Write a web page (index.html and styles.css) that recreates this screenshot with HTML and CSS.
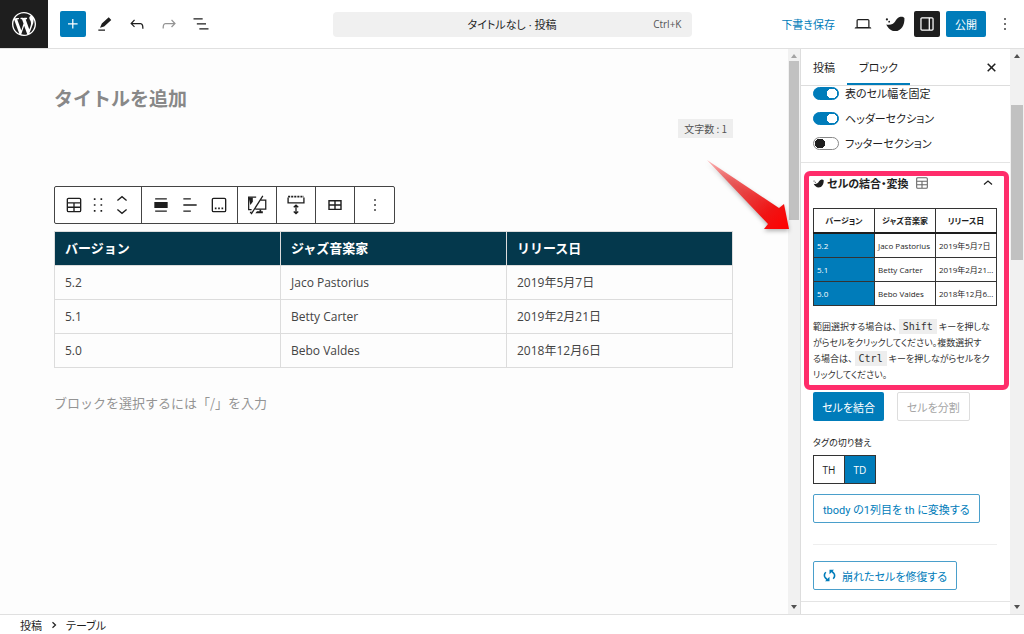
FILE: index.html
```html
<!DOCTYPE html>
<html lang="ja">
<head>
<meta charset="utf-8">
<title>タイトルなし · 投稿</title>
<link rel="stylesheet" href="styles.css">
</head>
<body>
<svg class="defs" aria-hidden="true">
  <symbol id="bird" viewBox="0 0 24 24"><path d="M1.500 12.500c2.500.8 5.500.6 8-.8C12.500 10 13.500 4.500 18.500 3.300c2-.4 3.700.2 4.800 1.400.5 8.500-3.800 15.800-11 15.800-5 0-8.800-3.500-10.800-8z"/><circle cx="2.300" cy="6.500" r="1.300"/><circle cx="5" cy="9.200" r="1.100"/></symbol>
  <symbol id="table" viewBox="0 0 24 24"><path fill="none" stroke="currentColor" stroke-width="1.600" d="M5.500 4h13A1.500 1.500 0 0 1 20 5.500v13a1.500 1.500 0 0 1-1.500 1.500h-13A1.500 1.500 0 0 1 4 18.500v-13A1.500 1.500 0 0 1 5.500 4zM4 9.500h16M4 14.700h16M12 9.500V20"/></symbol>
  <symbol id="more" viewBox="0 0 24 24"><path d="M13 19h-2v-2h2v2zm0-6h-2v-2h2v2zm0-6h-2V5h2v2z"/></symbol>
</svg>
<div class="app">
  <header class="topbar">
    <div class="tools">
      <a class="logo" href="#" aria-label="投稿一覧"><svg viewBox="0 0 20 20"><path d="M20 10c0-5.510-4.490-10-10-10C4.480 0 0 4.490 0 10c0 5.520 4.480 10 10 10 5.510 0 10-4.480 10-10zM7.780 15.370L4.370 6.220c.55-.02 1.170-.08 1.170-.08.5-.06.44-1.130-.06-1.110 0 0-1.450.11-2.370.11-.18 0-.37 0-.58-.01C4.120 2.690 6.870 1.110 10 1.110c2.330 0 4.450.87 6.050 2.340-.68-.11-1.650.39-1.650 1.580 0 .74.45 1.360.9 2.100.35.61.55 1.360.55 2.460 0 1.490-1.400 5-1.400 5l-3.030-8.370c.54-.02.82-.17.82-.17.5-.05.44-1.250-.06-1.220 0 0-1.440.12-2.380.12-.87 0-2.330-.12-2.330-.12-.5-.03-.56 1.200-.06 1.220l.92.08 1.260 3.410zM17.410 10c.24-.64.74-1.870.43-4.250.7 1.290 1.050 2.710 1.050 4.250 0 3.290-1.730 6.240-4.400 7.780.97-2.590 1.940-5.200 2.920-7.780zM6.100 18.090C3.120 16.650 1.110 13.530 1.110 10c0-1.300.23-2.480.72-3.590C3.250 10.300 4.670 14.200 6.100 18.090zm4.030-6.630l2.580 6.980c-.86.29-1.760.45-2.710.45-.79 0-1.570-.11-2.290-.33.81-2.380 1.620-4.740 2.420-7.100z"/></svg></a>
      <button class="square primary" aria-label="ブロックを追加"><svg viewBox="0 0 24 24"><path d="M11 12.500V17.500H12.500V12.500H17.500V11H12.500V6H11V11H6V12.500H11Z"/></svg></button>
      <button class="tool" aria-label="ツール"><svg viewBox="0 0 24 24"><path d="M19.500 7.200l-3-3.400L8.200 11.500l-2.200 5 5-1.600zM4 18.500h8V20H4z"/></svg></button>
      <button class="tool" aria-label="元に戻す"><svg viewBox="0 0 24 24"><path d="M18.300 11.700c-.6-.6-1.400-.9-2.300-.9H6.700l2.900-3.300-1.100-1-4.500 5L8.500 16l1-1-2.700-2.700H16c.5 0 .9.2 1.300.5 1 1 1 3.400 1 4.500v.3h1.500v-.2c0-1.500 0-4.300-1.500-5.700z"/></svg></button>
      <button class="tool" aria-label="やり直す" disabled><svg viewBox="0 0 24 24"><path d="M15.600 6.500l-1.100 1 2.900 3.300H8c-.9 0-1.700.3-2.300.9-1.400 1.500-1.400 4.200-1.400 5.600v.2h1.500v-.3c0-1.100 0-3.500 1-4.500.3-.3.7-.5 1.300-.5h9.200L14.500 15l1.100 1.100 4.600-4.600-4.600-5z"/></svg></button>
      <button class="tool" aria-label="リスト表示"><svg viewBox="0 0 24 24"><path d="M3 5h11v1.500H3V5Zm4 6h11v1.500H7V11ZM21 17H10v1.500h11V17Z"/></svg></button>
    </div>
    <button class="command"><span class="command-title">タイトルなし · 投稿</span><span class="shortcut">Ctrl+K</span></button>
    <div class="settings">
      <button class="draft">下書き保存</button>
      <button class="tool" aria-label="表示"><svg viewBox="0 0 24 24"><path d="M20.500 16h-.7V8c0-1.100-.9-2-2-2H6.200c-1.100 0-2 .9-2 2v8h-.7c-.8 0-1.500.7-1.500 1.500h20c0-.8-.7-1.500-1.500-1.500zM5.700 8c0-.3.2-.5.5-.5h11.600c.3 0 .5.2.5.5v7.600H5.700V8z"/></svg></button>
      <button class="tool" aria-label="SWELL"><svg><use href="#bird"/></svg></button>
      <button class="square dark" aria-label="設定"><svg viewBox="0 0 24 24"><path d="M18 4H6c-1.100 0-2 .9-2 2v12c0 1.100.9 2 2 2h12c1.100 0 2-.9 2-2V6c0-1.100-.9-2-2-2zm-4 14.500H6c-.3 0-.5-.2-.5-.5V6c0-.3.2-.5.5-.5h8v13zm4.500-.5c0 .3-.2.5-.5.5h-2.500v-13H18c.3 0 .5.2.5.5v12z"/></svg></button>
      <button class="publish">公開</button>
      <button class="tool" aria-label="オプション"><svg><use href="#more"/></svg></button>
    </div>
  </header>

  <div class="body">
    <main class="canvas">
      <h1 class="title">タイトルを追加</h1>
      <p class="count">文字数 : 1</p>
      <div class="toolbar" role="toolbar" aria-label="ブロックツール">
        <div class="group first">
          <button aria-label="テーブル"><svg><use href="#table"/></svg></button>
          <button aria-label="ドラッグ"><svg viewBox="0 0 24 24"><path d="M7 6h2V4H7zm0 7h2v-2H7zm0 7h2v-2H7zM15 4v2h2V4zm0 9h2v-2h-2zm0 7h2v-2h-2z"/></svg></button>
          <button aria-label="移動"><svg viewBox="0 0 24 24"><path fill="none" stroke="currentColor" stroke-width="1.600" d="M6.500 6.500L12 2l5.500 4.500M6.500 17.500L12 22l5.500-4.500"/></svg></button>
        </div>
        <div class="group second">
          <button aria-label="配置"><svg viewBox="0 0 24 24"><path d="M5 4h14v1.500H5zM4 8.500h16v7H4zM5 18.500h14V20H5z"/></svg></button>
          <button aria-label="カラムの寄せ"><svg viewBox="0 0 24 24"><path d="M4 4h9v1.500H4zM4 11.200h16v1.600H4zM4 18.500h9V20H4z"/></svg></button>
          <button aria-label="キャプション"><svg viewBox="0 0 24 24"><rect x="4" y="4" width="16" height="16" rx="1.500" fill="none" stroke="currentColor" stroke-width="1.600"/><path d="M7 15h2v2H7zm4 0h2v2h-2zm4 0h2v2h-2z"/></svg></button>
        </div>
        <div class="group">
          <button aria-label="デバイス制限"><svg viewBox="0 0 24 24"><path d="M2 3h5v5l-3 4z"/><path fill="none" stroke="currentColor" stroke-width="1.500" d="M11 2.500H2v15h3.500M19 1L5 23M16.500 6h6v11H10"/><path d="M12 19.500h3v-2h2v2h2V22h-9zM3.500 20H6l-1 2H3.500z"/></svg></button>
        </div>
        <div class="group">
          <button aria-label="下の余白"><svg viewBox="0 0 24 24"><path fill="none" stroke="currentColor" stroke-width="1.600" d="M2.500 3v6.500h19V3M12 12.500v9.500M9.300 14.800L12 12.200l2.700 2.600M9.300 19.700L12 22.300l2.700-2.600"/><path fill="none" stroke="currentColor" stroke-width="2" stroke-dasharray="2.500 1.200" d="M2.500 2h19"/></svg></button>
        </div>
        <div class="group">
          <button aria-label="表を編集"><svg viewBox="0 0 24 24"><path fill="none" stroke="currentColor" stroke-width="1.700" d="M4.800 6.800h14.400v10.400H4.800zM4.800 12h14.400M12 6.800v10.400"/></svg></button>
        </div>
        <div class="group">
          <button aria-label="オプション"><svg><use href="#more"/></svg></button>
        </div>
      </div>
      <table class="content-table">
        <thead><tr><th>バージョン</th><th>ジャズ音楽家</th><th>リリース日</th></tr></thead>
        <tbody>
          <tr><td>5.2</td><td>Jaco Pastorius</td><td>2019年5月7日</td></tr>
          <tr><td>5.1</td><td>Betty Carter</td><td>2019年2月21日</td></tr>
          <tr><td>5.0</td><td>Bebo Valdes</td><td>2018年12月6日</td></tr>
        </tbody>
      </table>
      <p class="prompt">ブロックを選択するには「/」を入力</p>
    </main>
    <div class="scrollbar narrow" aria-hidden="true"><span class="up faint"></span><div class="track"><div class="thumb canvas-thumb"></div></div><span class="down"></span></div>

    <aside class="sidebar">
      <div class="tabs">
        <button class="tab">投稿</button>
        <button class="tab active">ブロック</button>
        <button class="close" aria-label="閉じる"><svg viewBox="0 0 12 12"><path d="M2.500 2.500l7 7M9.500 2.500l-7 7"/></svg></button>
      </div>
      <div class="toggles">
        <label><input type="checkbox" checked>表のセル幅を固定</label>
        <label><input type="checkbox" checked>ヘッダーセクション</label>
        <label><input type="checkbox">フッターセクション</label>
      </div>
      <section class="panel">
        <button class="panel-head"><svg class="mini-bird"><use href="#bird"/></svg><span>セルの結合・変換</span><svg class="mini-table"><use href="#table"/></svg><svg class="chevron" viewBox="0 0 12 12"><path d="M2 7.500L6 4l4 3.500"/></svg></button>
        <table class="cells">
          <thead><tr><th>バージョン</th><th>ジャズ音楽家</th><th>リリース日</th></tr></thead>
          <tbody>
            <tr><td class="selected">5.2</td><td>Jaco Pastorius</td><td>2019年5月7日</td></tr>
            <tr><td class="selected">5.1</td><td>Betty Carter</td><td>2019年2月21...</td></tr>
            <tr><td class="selected">5.0</td><td>Bebo Valdes</td><td>2018年12月6...</td></tr>
          </tbody>
        </table>
        <p class="help">範囲選択する場合は、<kbd>Shift</kbd>キーを押しな<br>がらセルをクリックしてください。複数選択す<br>る場合は、<kbd>Ctrl</kbd>キーを押しながらセルをク<br>リックしてください。</p>
        <div class="actions"><button class="btn filled">セルを結合</button><button class="btn muted" disabled>セルを分割</button></div>
        <p class="label" id="tag-label">タグの切り替え</p>
        <div class="segmented" role="group" aria-labelledby="tag-label"><button>TH</button><button class="on">TD</button></div>
        <button class="btn outline">tbody の1列目を th に変換する</button>
        <hr>
        <button class="btn outline"><svg viewBox="0 0 16 16"><path class="line" d="M3.500 4C1.200 6 1.200 9 3 11l2.500 2.500M12.500 12c2.300-2 2.300-5 .5-7l-2.500-2.500"/><path d="M2.500 15h5.500V9.500zM13.500 1H8v5.500z"/></svg>崩れたセルを修復する</button>
        <div class="callout"></div>
      </section>
    </aside>
    <div class="scrollbar" aria-hidden="true"><span class="up"></span><div class="track"><div class="thumb side-thumb"></div></div><span class="down"></span></div>
    <svg class="arrow" viewBox="0 0 90 80" aria-hidden="true"><defs><linearGradient id="fade" x1="0" y1="0" x2="1" y2="1"><stop offset="0" stop-color="#f33" stop-opacity=".35"/><stop offset=".3" stop-color="#e33" stop-opacity=".75"/><stop offset=".75" stop-color="#f01414"/><stop offset="1" stop-color="#f00"/></linearGradient></defs><path fill="url(#fade)" d="M2 3L74 51l5-4 5 25H59l4-5z"/></svg>
  </div>

  <footer class="breadcrumb"><span>投稿</span><svg viewBox="0 0 8 8"><path d="M2.500 1.200L5.500 4 2.500 6.800"/></svg><span>テーブル</span></footer>
</div>
</body>
</html>
```
FILE: styles.css
```css
* { box-sizing: border-box; }
body { margin: 0; color: #1e1e1e; background: #fff; font-family: "Open Sans", "Noto Sans CJK JP", sans-serif; font-size: 11px; font-feature-settings: "palt"; }
button { font: inherit; font-feature-settings: inherit; color: inherit; background: none; border: 0; padding: 0; margin: 0; display: flex; align-items: center; justify-content: center; white-space: nowrap; }
svg { fill: currentColor; flex: none; }
h1, p { margin: 0; }
.defs { display: none; }
.app { height: 100vh; display: flex; flex-direction: column; }

.topbar { flex: none; height: 49px; border-bottom: 1px solid #e0e0e0; display: grid; grid-template-columns: 1fr minmax(0, 359px) 1fr; align-items: center; }
.logo { width: 48px; height: 48px; margin-right: 6px; background: #1e1e1e; color: #fff; display: grid; place-items: center; }
.logo svg { width: 24px; height: 24px; }
.tools { display: flex; gap: 6px; align-items: center; }
.tool, .square { width: 26px; height: 26px; border-radius: 2px; }
.tool svg, .square svg { width: 20px; height: 20px; }
.tool:disabled { color: #949494; }
.primary, .publish { background: #007cba; color: #fff; }
.dark { background: #1e1e1e; color: #fff; }
.command { height: 25px; background: #f0f0f0; border-radius: 4px; padding: 0 10px; display: grid; grid-template-columns: 50px 1fr 50px; }
.command-title { grid-column: 2; }
.shortcut { text-align: right; font-size: 10px; color: #555; }
.settings { display: flex; justify-content: flex-end; align-items: center; gap: 6px; padding-right: 6px; }
.draft { color: #007cba; margin-right: 9px; }
.publish { height: 26px; padding: 0 9px; border-radius: 2px; }

.body { flex: 1; min-height: 0; display: flex; position: relative; }
.canvas { flex: 1; min-width: 0; padding: 35px 55px 0 54px; font-family: "Noto Sans CJK JP", sans-serif; font-feature-settings: normal; display: flex; flex-direction: column; align-items: flex-start; background: #fdfdfd; }
.title { font-size: 19px; line-height: 28px; color: #888; font-weight: 700; }
.count { align-self: flex-end; margin-top: 7px; padding: 0 6px; line-height: 19px; font-size: 10px; background: #eee; color: #555; }
.toolbar { margin-top: 48px; height: 38px; border: 1px solid #444; border-radius: 2px; display: flex; background: #fff; }
.group { display: flex; align-items: center; justify-content: center; width: 39px; border-right: 1px solid #444; }
.group:last-child { border-right: 0; }
.first { width: 87px; gap: 4px; }
.second { width: 96px; gap: 9px; }
.group svg { width: 20px; height: 20px; }
.content-table { margin-top: 7px; width: 100%; table-layout: fixed; border-collapse: collapse; font-family: "Open Sans", "Noto Sans CJK JP", sans-serif; font-size: 12px; line-height: 17px; color: #444; }
.content-table th { background: #04384c; color: #fff; font-size: 13px; text-align: left; }
.content-table th, .content-table td { border: 1px solid #dcdcdc; padding: 8px 10px; }
.prompt { margin-top: 25px; font-size: 13px; line-height: 20px; color: #949494; }

.scrollbar { flex: none; width: 14px; background: #f1f1f1; display: flex; flex-direction: column; align-items: center; padding: 5px 1px; }
.narrow { width: 12px; }
.up, .down { border: 3px solid transparent; }
.up { border-top: 0; border-bottom: 4px solid #505050; }
.down { border-bottom: 0; border-top: 4px solid #505050; }
.faint { border-bottom-color: #a3a3a3; }
.track { flex: 1; align-self: stretch; padding-top: 3px; }
.thumb { background: #c1c1c1; }
.canvas-thumb { height: 159px; }
.side-thumb { height: 155px; margin-top: 44px; }

.sidebar { flex: none; width: 210px; border-left: 1px solid #ddd; display: flex; flex-direction: column; }
.tabs { flex: none; height: 37px; border-bottom: 1px solid #ddd; display: flex; }
.tab { padding: 0 12px; }
.tab.active { box-shadow: inset 0 -2px #007cba; }
.close { margin-left: auto; width: 38px; }
.close svg { width: 13px; height: 13px; }
.close path { stroke: currentColor; stroke-width: 1.400; }
.toggles { flex: none; height: 77px; padding-left: 12px; display: flex; flex-direction: column; gap: 10px; border-bottom: 1px solid #e4e4e4; }
.toggles label { display: flex; align-items: center; gap: 6px; height: 15px; line-height: 15px; }
.toggles input { appearance: none; margin: 0; width: 26px; height: 13px; border-radius: 7px; border: 1px solid #888; background: radial-gradient(circle at 6px 50%, #1e1e1e 5px, transparent 5px) #fff; }
.toggles input:checked { border-color: #007cba; background: radial-gradient(circle at 18px 50%, #fff 5px, transparent 5px) #007cba; }
.panel { position: relative; padding: 8px 13px 11px 12px; border-bottom: 1px solid #e4e4e4; }
.panel-head { width: 100%; height: 24px; font-weight: 700; justify-content: flex-start; gap: 3px; }
.mini-bird { width: 11px; height: 11px; }
.mini-table { width: 16px; height: 16px; color: #666; margin-left: 2px; }
.chevron { width: 12px; height: 12px; margin-left: auto; margin-right: 3px; }
.chevron path, .breadcrumb path { fill: none; stroke: currentColor; stroke-width: 1.200; }
.cells { margin-top: 13px; width: 100%; table-layout: fixed; border-collapse: collapse; font-size: 8px; line-height: 15px; }
.cells th, .cells td { border: 1px solid #333; padding: 4px 3px; white-space: nowrap; text-align: left; }
.cells th { text-align: center; border-bottom: 2px solid #1e1e1e; }
.cells .selected { background: #007cba; color: #fff; }
.help { margin-top: 13px; font-size: 9px; line-height: 16px; white-space: nowrap; color: #333; }
.help kbd { font: 10px "DejaVu Sans Mono", monospace; background: #eee; padding: 2px 4px; margin: 0 2px; }
.actions { display: flex; gap: 13px; margin-top: 9px; }
.btn { height: 29px; padding: 0 9px; border-radius: 2px; gap: 6px; font-family: Roboto, "Noto Sans CJK JP", sans-serif; }
.btn svg { width: 13px; height: 13px; }
.btn .line { fill: none; stroke: currentColor; stroke-width: 2; }
.filled { background: #007cba; color: #fff; }
.muted { border: 1px solid #ddd; color: #a5a5a5; }
.outline { border: 1px solid #4a9fcb; color: #007cba; }
.label { margin-top: 14px; font-size: 9px; line-height: 16px; }
.segmented { display: flex; width: max-content; margin: 4px 0 10px; border: 1px solid #333; font-size: 10px; }
.segmented button { width: 30px; height: 27px; }
.segmented .on { width: 31px; background: #007cba; color: #fff; border-left: 1px solid #333; }
hr { border: 0; border-top: 1px solid #eee; margin: 21px 0 16px; }
.callout { position: absolute; left: 3px; right: 1px; top: 8px; height: 219px; border: 5px solid #ff2d6b; border-radius: 6px; pointer-events: none; }
.arrow { position: absolute; right: 229px; top: 108px; width: 90px; height: 80px; filter: drop-shadow(0 2px 2px rgba(0, 0, 0, .3)); pointer-events: none; }

.breadcrumb { flex: none; height: 20px; border-top: 1px solid #e0e0e0; padding-left: 20px; display: flex; align-items: center; gap: 8px; }
.breadcrumb svg { width: 8px; height: 8px; }
```
